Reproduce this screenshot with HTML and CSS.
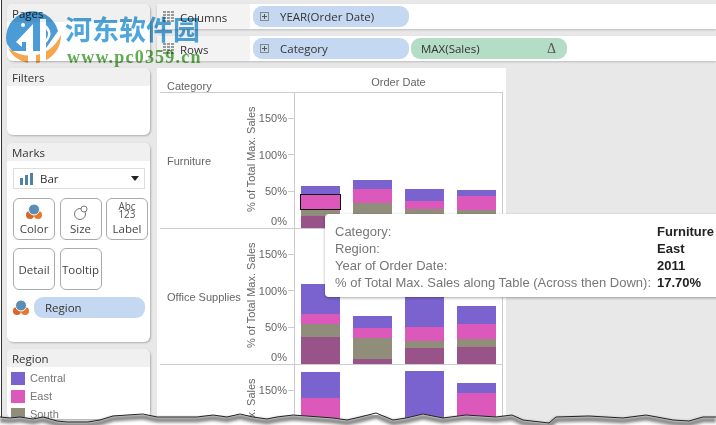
FILE: index.html
```html
<!DOCTYPE html>
<html lang="en">
<head>
  <meta charset="UTF-8">
  <title>Order Date by Category</title>
  <link rel="stylesheet" href="styles.css">
</head>
<body>
  <div class="app">
    <div class="sidebar">
      <div class="card pages-card"><div class="card-head">Pages</div></div>
      <div class="card filters-card"><div class="card-head">Filters</div></div>

      <div class="card marks-card">
        <div class="card-head">Marks</div>
        <div class="mark-select">
          <svg class="bar-icon" width="14" height="12" viewBox="0 0 14 12"><path fill="#4e81a5" d="M0 5h3v7H0zM5 2h3v10H5zM10 0h3v12h-3z"/></svg>
          <span>Bar</span>
          <span class="caret"></span>
        </div>
        <div class="mark-buttons">
          <div class="mark-btn">
            <svg width="16" height="16" viewBox="0 0 16 16"><circle cx="4" cy="11" r="4" fill="#d9662a"/><circle cx="12" cy="11" r="4" fill="#e9772a"/><circle cx="8" cy="5.5" r="5.5" fill="#5b8db5" stroke="#fff"/></svg>
            <span>Color</span>
          </div>
          <div class="mark-btn">
            <svg width="16" height="15" viewBox="0 0 16 15"><circle cx="7" cy="9" r="5.5" fill="none" stroke="#777"/><circle cx="11" cy="4" r="3" fill="#fff" stroke="#777"/></svg>
            <span>Size</span>
          </div>
          <div class="mark-btn">
            <div class="abc">Abc<br>123</div>
            <span>Label</span>
          </div>
          <div class="mark-btn plain"><span>Detail</span></div>
          <div class="mark-btn plain"><span>Tooltip</span></div>
        </div>
        <div class="mark-pill">
          <svg width="16" height="16" viewBox="0 0 16 16"><circle cx="4" cy="11" r="4" fill="#d9662a"/><circle cx="12" cy="11" r="4" fill="#e9772a"/><circle cx="8" cy="5.5" r="5.5" fill="#5b8db5" stroke="#fff"/></svg>
          <div class="pill blue region-pill">Region</div>
        </div>
      </div>

      <div class="card legend-card">
        <div class="card-head">Region</div>
        <div class="legend-item"><i class="swatch c-central"></i>Central</div>
        <div class="legend-item"><i class="swatch c-east"></i>East</div>
        <div class="legend-item"><i class="swatch c-south"></i>South</div>
      </div>
    </div>

    <div class="main">
      <div class="shelf">
        <div class="shelf-name">
          <svg class="grip" width="12" height="13" viewBox="0 0 12 13"><path fill="#999" d="M0 0h3v2H0zM4 0h3v2H4zM8 0h3v2H8zM0 3h3v2H0zM4 3h3v2H4zM8 3h3v2H8zM0 6h3v2H0zM4 6h3v2H4zM8 6h3v2H8zM0 9h3v2H0zM4 9h3v2H4zM8 9h3v2H8z"/></svg>
          Columns
        </div>
        <div class="shelf-body">
          <div class="pill blue"><i class="plus"></i>YEAR(Order Date)</div>
        </div>
      </div>
      <div class="shelf">
        <div class="shelf-name">
          <svg class="grip" width="12" height="13" viewBox="0 0 12 13"><path fill="#999" d="M0 0h3v2H0zM4 0h3v2H4zM8 0h3v2H8zM0 3h3v2H0zM4 3h3v2H4zM8 3h3v2H8zM0 6h3v2H0zM4 6h3v2H4zM8 6h3v2H8zM0 9h3v2H0zM4 9h3v2H4zM8 9h3v2H8z"/></svg>
          Rows
        </div>
        <div class="shelf-body">
          <div class="pill blue"><i class="plus"></i>Category</div>
          <div class="pill green">MAX(Sales)<span class="delta">Δ</span></div>
        </div>
      </div>

      <div class="chart">
        <div class="chart-head">
          <div class="head-cat">Category</div>
          <div class="head-date">Order Date</div>
        </div>

        <div class="row">
          <div class="row-label">Furniture</div>
          <div class="axis-title">% of Total Max. Sales</div>
          <div class="axis">
            <div class="tick">150%</div><div class="tick">100%</div><div class="tick">50%</div><div class="tick tick-end">0%</div>
          </div>
          <div class="pane">
            <div class="bar"><i class="c-central" style="height:9px"></i><i class="c-east selected" style="height:14px"></i><i class="c-south" style="height:7px"></i><i class="c-west" style="height:12px"></i></div>
            <div class="bar"><i class="c-central" style="height:9px"></i><i class="c-east" style="height:14px"></i><i class="c-south" style="height:12px"></i><i class="c-west" style="height:13px"></i></div>
            <div class="bar"><i class="c-central" style="height:12px"></i><i class="c-east" style="height:8px"></i><i class="c-south" style="height:8px"></i><i class="c-west" style="height:11px"></i></div>
            <div class="bar"><i class="c-central" style="height:6px"></i><i class="c-east" style="height:14px"></i><i class="c-south" style="height:7px"></i><i class="c-west" style="height:11px"></i></div>
          </div>
        </div>

        <div class="row">
          <div class="row-label">Office Supplies</div>
          <div class="axis-title">% of Total Max. Sales</div>
          <div class="axis">
            <div class="tick">150%</div><div class="tick">100%</div><div class="tick">50%</div><div class="tick tick-end">0%</div>
          </div>
          <div class="pane">
            <div class="bar"><i class="c-central" style="height:30px"></i><i class="c-east" style="height:10px"></i><i class="c-south" style="height:13px"></i><i class="c-west" style="height:27px"></i></div>
            <div class="bar"><i class="c-central" style="height:12px"></i><i class="c-east" style="height:10px"></i><i class="c-south" style="height:21px"></i><i class="c-west" style="height:5px"></i></div>
            <div class="bar"><i class="c-central" style="height:60px"></i><i class="c-east" style="height:14px"></i><i class="c-south" style="height:7px"></i><i class="c-west" style="height:16px"></i></div>
            <div class="bar"><i class="c-central" style="height:18px"></i><i class="c-east" style="height:15px"></i><i class="c-south" style="height:8px"></i><i class="c-west" style="height:17px"></i></div>
          </div>
        </div>

        <div class="row">
          <div class="row-label"></div>
          <div class="axis-title">% of Total Max. Sales</div>
          <div class="axis">
            <div class="tick">150%</div>
          </div>
          <div class="pane">
            <div class="bar"><i class="c-central" style="height:26px"></i><i class="c-east" style="height:102px"></i></div>
            <div class="bar"><i class="c-central" style="height:60px"></i></div>
            <div class="bar"><i class="c-central" style="height:129px"></i></div>
            <div class="bar"><i class="c-central" style="height:10px"></i><i class="c-east" style="height:107px"></i></div>
          </div>
        </div>

        <div class="tooltip">
          <span>Category:</span><b>Furniture</b>
          <span>Region:</span><b>East</b>
          <span>Year of Order Date:</span><b>2011</b>
          <span>% of Total Max. Sales along Table (Across then Down):</span><b>17.70%</b>
        </div>
      </div>
    </div>
  </div>

  <!-- site watermark -->
  <div class="watermark">
    <svg class="wm-logo" width="60" height="56" viewBox="0 0 60 56">
      <path fill="#4a9bd6" d="M3 33A26 26 0 1 1 54 20L40 40H8z"/>
      <path fill="#f5a74f" d="M4 37Q18 47 33 44Q49 40 57 24A28 28 0 0 1 4 37z"/>
      <path fill="#fff" d="M12 31L29 13V44H22V31H18V36z"/>
      <path fill="#fff" d="M36 8H42V14Q51 22 42 32V56H36z"/>
      <path fill="#fff" d="M24 44H32V56H24z"/>
      <path fill="#4a9bd6" d="M42 18Q46 23 42 28z"/>
      <circle cx="19" cy="14" r="2" fill="#fff"/>
    </svg>
    <div class="wm-cn">河东软件园</div>
    <div class="wm-url">www.pc0359.cn</div>
  </div>

  <svg class="torn" width="716" height="25" viewBox="0 0 716 25">
    <defs><filter id="soft"><feGaussianBlur stdDeviation="1.6"/></filter></defs>
    <polygon fill="#fff" points="0,17 10,18 20,17 33,19 43,17 57,21 67,22 88,22 100,20 113,16 127,15 143,14 157,17 183,17 197,17 213,15 227,17 240,14 253,17 267,19 277,17 293,15 320,17 333,18 347,20 360,17 376,13 393,20 406,18 423,14 443,18 466,15 496,17 512,15 523,20 549,23 556,17 589,16 623,18 646,15 673,20 689,21 703,17 716,17 716,25 0,25"/>
    <polyline class="torn-shadow" filter="url(#soft)" points="0,20 10,21 20,20 33,22 43,20 57,24 67,25 88,25 100,23 113,19 127,18 143,17 157,20 183,20 197,20 213,18 227,20 240,17 253,20 267,22 277,20 293,18 320,20 333,21 347,23 360,20 376,16 393,23 406,21 423,17 443,21 466,18 496,20 512,18 523,23 549,26 556,20 589,19 623,21 646,18 673,23 689,24 703,20 716,20"/>
    <polyline class="torn-line" points="0,17 10,18 20,17 33,19 43,17 57,21 67,22 88,22 100,20 113,16 127,15 143,14 157,17 183,17 197,17 213,15 227,17 240,14 253,17 267,19 277,17 293,15 320,17 333,18 347,20 360,17 376,13 393,20 406,18 423,14 443,18 466,15 496,17 512,15 523,20 549,23 556,17 589,16 623,18 646,15 673,20 689,21 703,17 716,17"/>
  </svg>
</body>
</html>
```

FILE: styles.css
```css
html, body {
  margin: 0;
  padding: 0;
  width: 716px;
  height: 425px;
  overflow: hidden;
  background: #fff;
}

body {
  position: relative;
  font-family: "Open Sans", "Noto Sans", sans-serif;
  font-size: 11.5px;
  color: #333;
}

.app {
  display: flex;
  gap: 7px;
  box-sizing: border-box;
  height: 425px;
  margin-left: 1px;
  padding: 4px 0 0 5px;
  border-left: 1px solid #333;
  background: #e8e8e8;
  overflow: hidden;
}

/* left column */
.sidebar {
  width: 143px;
  flex: none;
  display: flex;
  flex-direction: column;
  gap: 7px;
}

.card {
  flex: none;
  background: #fff;
  border-radius: 6px;
  box-shadow: 1px 1px 2px rgba(0, 0, 0, 0.25);
  overflow: hidden;
}

.card-head {
  height: 18px;
  line-height: 20px;
  padding-left: 5px;
  background: #f0f0f0;
}

.pages-card { height: 57px; }
.filters-card { height: 67px; }
.marks-card { height: 199px; margin-top: 1px; }
.legend-card { height: 70px; }

.mark-select {
  display: flex;
  align-items: center;
  gap: 6px;
  height: 19px;
  margin: 7px 5px 0 6px;
  padding: 0 5px 0 6px;
  border: 1px solid #ddd;
}

.caret {
  margin-left: auto;
  border-left: 4px solid transparent;
  border-right: 4px solid transparent;
  border-top: 5px solid #222;
}

.mark-buttons {
  display: grid;
  grid-template-columns: repeat(3, 42px);
  grid-auto-rows: 42px;
  gap: 8px 4.5px;
  margin: 9px 0 0 6px;
}

.mark-btn {
  box-sizing: border-box;
  display: flex;
  flex-direction: column;
  align-items: center;
  justify-content: flex-end;
  padding-bottom: 2px;
  border: 1px solid #aaa;
  border-radius: 6px;
  line-height: 17px;
  color: #444;
}

.mark-btn.plain {
  justify-content: center;
  padding-bottom: 0;
}

.abc {
  font-size: 10px;
  line-height: 8px;
  color: #555;
  text-align: center;
  padding-bottom: 2px;
}

.mark-pill {
  display: flex;
  align-items: center;
  gap: 5px;
  margin: 7px 0 0 6px;
}

.pill {
  box-sizing: border-box;
  width: 156px;
  height: 21px;
  display: flex;
  align-items: center;
  border-radius: 9px;
  padding-left: 7px;
  white-space: nowrap;
  color: #333;
}

.blue { background: #c5d8f2; }
.green { background: #b5dcc5; padding-left: 10px; }

.region-pill {
  width: 111px;
  padding-left: 11px;
}

.plus {
  box-sizing: border-box;
  width: 9px;
  height: 9px;
  margin-right: 11px;
  border: 1px solid #888;
  background: linear-gradient(#555, #555) center / 5px 1px no-repeat,
    linear-gradient(#555, #555) center / 1px 5px no-repeat;
}

.delta {
  margin-left: auto;
  margin-right: 11px;
  font-family: "Liberation Serif", serif;
  font-size: 14px;
  color: #555;
}

.legend-item {
  display: flex;
  align-items: center;
  gap: 5px;
  height: 14px;
  margin: 4px 0 2px 4px;
  font-family: "Liberation Sans", sans-serif;
  font-size: 11px;
  color: #777;
}

.swatch {
  width: 14px;
  height: 13px;
}

/* shelves */
.main {
  width: 559px;
  flex: none;
  display: flex;
  flex-direction: column;
  gap: 7px;
}

.shelf {
  display: flex;
  height: 25px;
  box-shadow: 0 1px 2px rgba(0, 0, 0, 0.2);
  flex: none;
}

.shelf-name {
  width: 93px;
  flex: none;
  display: flex;
  align-items: center;
  gap: 5px;
  padding: 2px 0 0 6px;
  box-sizing: border-box;
  background: #f3f3f3;
}

.shelf-body {
  flex: 1;
  display: flex;
  gap: 2px;
  padding: 2px 0 0 3px;
  background: #fff;
}

/* chart */
.chart {
  position: relative;
  width: 349px;
  flex: 1;
  box-sizing: border-box;
  padding: 0 3px;
  background: #fff;
  font-family: "Liberation Sans", sans-serif;
  font-size: 11px;
  color: #666;
}

.chart-head {
  display: flex;
  height: 25px;
  box-sizing: border-box;
  border-bottom: 1px solid #ccc;
}

.head-cat {
  width: 134px;
  padding: 12px 0 0 7px;
  box-sizing: border-box;
}

.head-date {
  width: 209px;
  padding-top: 8px;
  text-align: center;
}

.row {
  display: grid;
  grid-template-columns: 84px 14px 36px 209px;
  grid-template-rows: 135px;
  height: 136px;
  box-sizing: border-box;
  border-bottom: 1px solid #ccc;
}

.row-label {
  align-self: center;
  padding: 0 0 0 7px;
  white-space: nowrap;
}

.axis-title {
  writing-mode: vertical-rl;
  transform: rotate(180deg);
  justify-self: center;
  text-align: center;
  white-space: nowrap;
  padding-top: 2px;
}

.axis {
  display: flex;
  flex-direction: column;
  padding-top: 7px;
}

.tick {
  display: flex;
  align-items: center;
  justify-content: flex-end;
  gap: 1px;
  height: 36.5px;
  flex: none;
}

.tick::after {
  content: "";
  width: 6px;
  height: 1px;
  background: #ccc;
}

.tick-end {
  height: 14px;
  margin-top: 4.5px;
  padding-right: 7px;
}

.tick-end::after {
  display: none;
}

.pane {
  display: flex;
  align-items: flex-end;
  gap: 13px;
  padding-left: 6px;
  border-left: 1px solid #ccc;
  border-right: 1px solid #ccc;
  overflow: hidden;
}

.bar {
  width: 39px;
  flex: none;
  display: flex;
  flex-direction: column;
}

.bar i {
  display: block;
}

.c-central { background: #7b63cf; }
.c-east { background: #dd58bb; }
.c-south { background: #908d7a; }
.c-west { background: #985388; }

.selected {
  outline: 1.5px solid #111;
  outline-offset: -0.5px;
  position: relative;
}

.tooltip {
  position: absolute;
  left: 168px;
  top: 146px;
  display: grid;
  grid-template-columns: 322px auto;
  grid-auto-rows: 17px;
  align-items: center;
  width: 420px;
  height: 83px;
  box-sizing: border-box;
  padding: 9px 0 0 10px;
  background: #fff;
  border-radius: 4px 0 0 4px;
  box-shadow: 0 1px 3px rgba(0, 0, 0, 0.35);
  font-size: 13px;
  color: #777;
  white-space: nowrap;
}

.tooltip b {
  color: #222;
}

/* watermark over the top left corner */
.watermark {
  position: absolute;
  left: 0;
  top: 0;
  width: 210px;
  height: 70px;
  mix-blend-mode: multiply;
}

.wm-logo {
  position: absolute;
  left: 4px;
  top: 11px;
}

.wm-cn {
  position: absolute;
  left: 65px;
  top: 11px;
  font-family: "Noto Sans CJK SC", sans-serif;
  font-size: 27px;
  font-weight: 700;
  line-height: 36px;
  color: #4ea6dc;
  white-space: nowrap;
}

.wm-url {
  position: absolute;
  left: 67px;
  top: 47px;
  font-family: "Liberation Serif", serif;
  font-size: 18px;
  font-weight: 700;
  letter-spacing: 1.2px;
  line-height: 20px;
  color: #5fad4e;
  white-space: nowrap;
}

/* torn paper edge */
.torn {
  position: absolute;
  left: 0;
  bottom: 0;
}

.torn-line {
  fill: none;
  stroke: #222;
  stroke-width: 1;
}

.torn-shadow {
  fill: none;
  stroke: #888;
  stroke-width: 5;
}
```
